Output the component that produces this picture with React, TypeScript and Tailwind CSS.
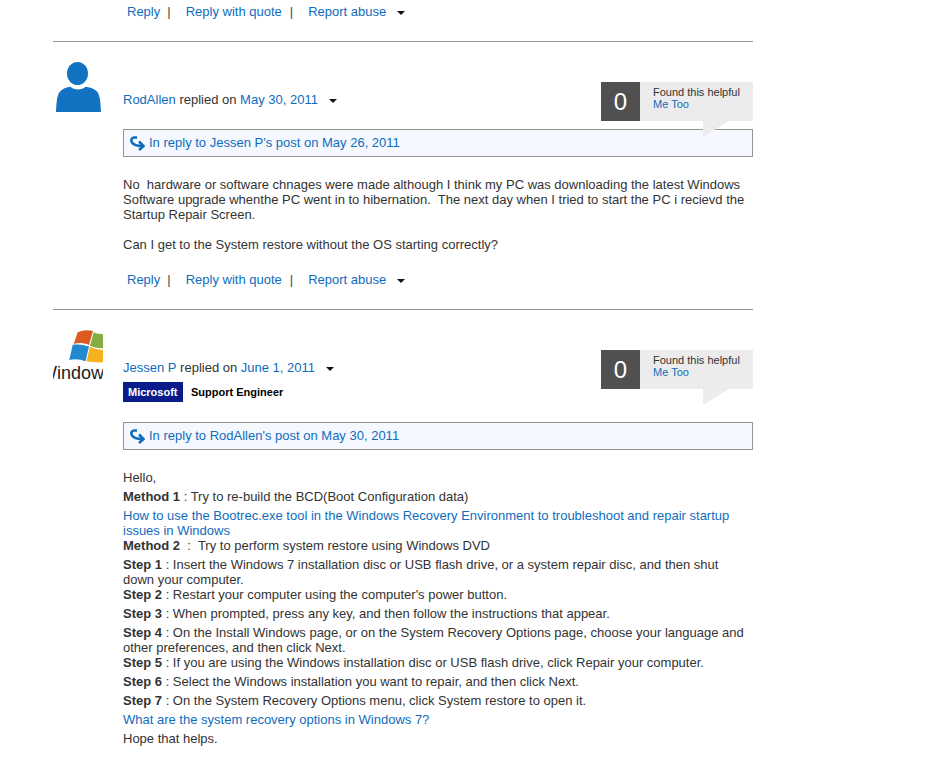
import React from "react";

const L = ({ children }: { children: React.ReactNode }) => <a className="text-[#0f6cbd] no-underline">{children}</a>;
const B = ({ children }: { children: React.ReactNode }) => <b className="font-bold">{children}</b>;

const Caret = () => <span className="inline-block w-0 h-0 border-x-[4px] border-x-transparent border-t-[4px] border-t-[#111] align-middle" />;

const Actions = () => (
  <div className="flex items-center h-[24px] pl-[74px] pb-[1px] text-[#0f6cbd]">
    <span>Reply</span>
    <span className="ml-[7px] text-[#444]">|</span>
    <span className="ml-[15px]">Reply with quote</span>
    <span className="ml-[8px] text-[#444]">|</span>
    <span className="ml-[15px]">Report abuse</span>
    <span className="ml-[11px] flex pt-[2px]"><Caret /></span>
  </div>
);

const Helpful = () => (
  <div className="relative flex h-[39px] w-[152px] text-[11px] leading-[12px]">
    <div className="w-[39px] bg-[#505050] text-white text-[24px] flex items-center justify-center font-light">0</div>
    <div className="flex-1 bg-[#ececec] pl-[13px] pt-[4px]">
      <div className="text-[#333]">Found this helpful</div>
      <div className="text-[#0f6cbd]">Me Too</div>
    </div>
    <svg className="absolute left-[102px] top-[39px]" width="26" height="16" viewBox="0 0 26 16"><path d="M0 0H26L0 16Z" fill="#ececec" /></svg>
  </div>
);

const ReplyTo = ({ children }: { children: React.ReactNode }) => (
  <div className="flex items-center h-[28px] border border-[#949494] bg-[#f5f9ff] pl-[5px] pb-[1px] text-[#0f6cbd]">
    <svg width="16" height="16" viewBox="0 0 16 16" className="mr-[4px]" fill="none">
      <path d="M8 2.500H5C2.500 2.500 1.500 5.500 3 7.500C4.500 9.800 7.500 11 13 11" stroke="#0f6cbd" strokeWidth="2.6" />
      <path d="M10 6.500L14.500 11L10 15" stroke="#0f6cbd" strokeWidth="2.6" />
    </svg>
    {children}
  </div>
);

const Person = () => (
  <svg width="46" height="50" viewBox="0 0 46 50" className="block">
    <ellipse cx="21.500" cy="11.500" rx="10.500" ry="11.500" fill="#1173c1" />
    <path d="M0 50C0.500 40 1 33 4 29.500C7 26.500 11 25 14.500 24.800C18 28.500 26 28.500 29.500 24.800C33 25 38 26.500 41 29.500C44 33 44.500 40 45 50Z" fill="#1173c1" />
  </svg>
);

const WinLogo = () => (
  <div className="relative w-[50px] h-[50px] overflow-hidden">
    <svg width="50" height="36" viewBox="0 0 50 36" className="block absolute top-[-1px] left-[1px]">
      <defs><filter id="b"><feGaussianBlur stdDeviation="0.6" /></filter></defs>
      <g filter="url(#b)">
        <path d="M23.700 3.300C28 1 34 0.500 39 2L35 16C29 13.500 24.500 13.800 19.700 15Z" fill="#dc5a20" />
        <path d="M39.700 3.300C43 5 47 5.500 52 5.200V19.200C46 19.500 41 18.800 36 16.700Z" fill="#86ad42" />
        <path d="M18.700 15.800C24 15 29 15.500 35 17.500L31.500 32.300C26 30 20.500 29.500 15.300 31Z" fill="#2088d0" />
        <path d="M36 17.800C41 20.500 46 21 52 21V33.300C45 33.500 38 33.500 32.500 32.300Z" fill="#f5b21e" />
      </g>
    </svg>
    <span className="absolute left-[-13px] top-[33px] text-[18px] leading-[20px] text-[#222] whitespace-nowrap">Windows</span>
  </div>
);

export default function App() {
  return (
    <div className="h-[782px] w-[940px] overflow-hidden bg-white font-['Liberation_Sans',Arial,sans-serif] text-[13px] leading-[15px] text-[#333]">
      <div className="ml-[53px] w-[700px]">
        <Actions />
        <div className="mt-[17px] h-px bg-[#949494]" />

        {/* First reply */}
        <div className="flex mt-[20px]">
          <div className="w-[70px] pl-[3px]"><Person /></div>
          <div className="flex-1">
            <div className="flex justify-between items-start pt-[20px] h-[67px]">
              <div className="mt-[10px] flex items-center">
                <L>RodAllen</L>&nbsp;replied on&nbsp;<L>May 30, 2011</L>
                <span className="ml-[11px] flex pt-[2px]"><Caret /></span>
              </div>
              <Helpful />
            </div>
            <ReplyTo>In reply to Jessen P's post on May 26, 2011</ReplyTo>
            <div className="mt-[20px]">
              No&nbsp; hardware or software chnages were made although I think my PC was downloading the latest Windows<br />
              Software upgrade whenthe PC went in to hibernation.&nbsp; The next day when I tried to start the PC i recievd the<br />
              Startup Repair Screen.
            </div>
            <div className="mt-[15px]">Can I get to the System restore without the OS starting correctly?</div>
          </div>
        </div>
        <div className="mt-[16px]"><Actions /></div>
        <div className="mt-[17px] h-px bg-[#949494]" />

        {/* Second reply */}
        <div className="flex mt-[20px]">
          <div className="w-[70px]"><WinLogo /></div>
          <div className="flex-1">
            <div className="flex justify-between items-start pt-[20px] h-[92px]">
              <div className="mt-[10px]">
                <div className="flex items-center">
                  <L>Jessen P</L>&nbsp;replied on&nbsp;<L>June 1, 2011</L>
                  <span className="ml-[11px] flex pt-[2px]"><Caret /></span>
                </div>
                <div className="flex items-center mt-[7px] text-[11px] font-bold text-black">
                  <span className="bg-[#0a1c8c] text-white h-[20px] leading-[20px] pl-[5px] w-[60px] whitespace-nowrap">Microsoft</span>
                  <span className="ml-[8px]">Support Engineer</span>
                </div>
              </div>
              <Helpful />
            </div>
            <ReplyTo>In reply to RodAllen's post on May 30, 2011</ReplyTo>
            <div className="mt-[20px]">Hello,</div>
            <div className="mt-[4px]"><B>Method 1</B> : Try to re-build the BCD(Boot Configuration data)</div>
            <div className="mt-[4px]"><L>How to use the Bootrec.exe tool in the Windows Recovery Environment to troubleshoot and repair startup<br />issues in Windows</L></div>
            <div><B>Method 2</B>&nbsp; :&nbsp; Try to perform system restore using Windows DVD</div>
            <div className="mt-[4px]"><B>Step 1</B> : Insert the Windows 7 installation disc or USB flash drive, or a system repair disc, and then shut<br />down your computer.</div>
            <div><B>Step 2</B> : Restart your computer using the computer's power button.</div>
            <div className="mt-[4px]"><B>Step 3</B> : When prompted, press any key, and then follow the instructions that appear.</div>
            <div className="mt-[4px]"><B>Step 4</B> : On the Install Windows page, or on the System Recovery Options page, choose your language and<br />other preferences, and then click Next.</div>
            <div><B>Step 5</B> : If you are using the Windows installation disc or USB flash drive, click Repair your computer.</div>
            <div className="mt-[4px]"><B>Step 6</B> : Select the Windows installation you want to repair, and then click Next.</div>
            <div className="mt-[4px]"><B>Step 7</B> : On the System Recovery Options menu, click System restore to open it.</div>
            <div className="mt-[4px]"><L>What are the system recovery options in Windows 7?</L></div>
            <div className="mt-[4px]">Hope that helps.</div>
          </div>
        </div>
      </div>
    </div>
  );
}
